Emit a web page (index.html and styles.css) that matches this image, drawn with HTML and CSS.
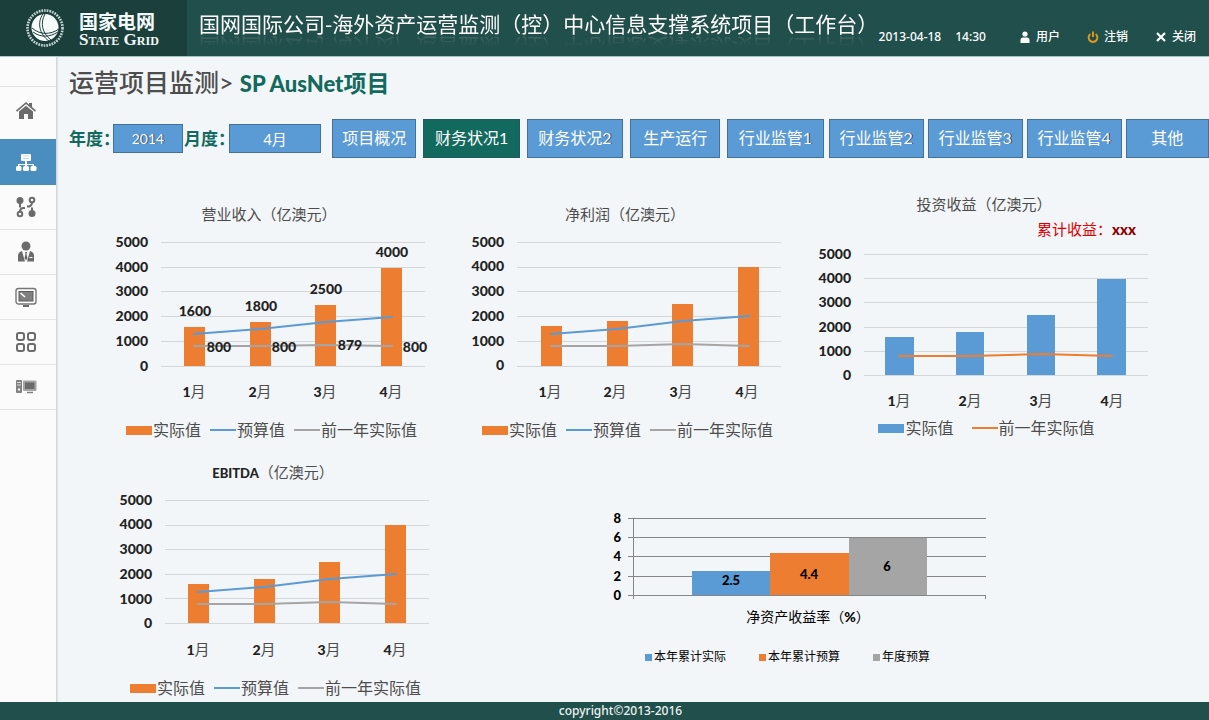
FILE: index.html
```html
<!DOCTYPE html>
<html lang="zh-CN">
<head>
<meta charset="utf-8">
<meta name="viewport" content="width=device-width, initial-scale=1">
<title>海外资产运营监测（控）中心</title>
<link rel="stylesheet" href="styles.css">
</head>
<body>
<header class="topbar">
  <a class="brand" href="#">
    <svg class="brand-mark" viewBox="0 0 40 40" aria-hidden="true">
      <circle cx="20" cy="20" r="17.500" fill="none" stroke="#c5d6d4" stroke-width="2.600" stroke-dasharray="1.700 1"/>
      <circle cx="20" cy="19.500" r="13.500" fill="#f6faf9"/>
      <g fill="none" stroke="#1c413d" stroke-width="1">
        <path d="M18 6c-6 8-4 20 6 27"/>
        <path d="M20 6c-5 9-3 19 6 26"/>
        <path d="M7 20c8 7 18 7 27 1"/>
        <path d="M8 24c8 6 17 5 25 0"/>
      </g>
    </svg>
    <span class="brand-text">
      <span class="brand-cn">国家电网</span>
      <span class="brand-en">State Grid</span>
    </span>
  </a>
  <h1 class="system-name">国网国际公司-海外资产运营监测（控）中心信息支撑系统项目（工作台）</h1>
  <div class="session">
    <time class="clock" datetime="2013-04-18T14:30"><span>2013-04-18</span><span>14:30</span></time>
    <button class="session-btn" type="button">
      <svg viewBox="0 0 12 12" class="session-icon" aria-hidden="true"><circle cx="6" cy="3" r="2.600" fill="#fff"/><path d="M1.500 12V9q0-2.600 2.600-2.600h3.800q2.600 0 2.600 2.600v3z" fill="#fff"/></svg>
      用户
    </button>
    <button class="session-btn" type="button">
      <svg viewBox="0 0 12 12" class="session-icon" aria-hidden="true"><path d="M3.400 3a4.400 4.400 0 1 0 5.200 0M6 .5v5.500" fill="none" stroke="#e39a1c" stroke-width="1.900"/></svg>
      注销
    </button>
    <button class="session-btn" type="button">
      <svg viewBox="0 0 12 12" class="session-icon" aria-hidden="true"><path d="M2 2l8 8M10 2l-8 8" stroke="#fff" stroke-width="2.200"/></svg>
      关闭
    </button>
  </div>
</header>

<div class="body">
  <nav class="sidebar" aria-label="主导航">
    <span class="side-top"></span>
    <a class="side-item side-home" href="#" aria-label="首页">
      <svg class="side-icon" viewBox="0 0 22 22"><path d="M1 11.500L11 3l3 2.500V4h3v4l4 3.500-1 1.200L11 5 2 12.700z" fill="#6b6b6b"/><path d="M4 12.500L11 6.800l7 5.700V20h-5v-5H9v5H4z" fill="#6b6b6b"/></svg>
    </a>
    <a class="side-item active" href="#" aria-label="组织" aria-current="page">
      <svg class="side-icon" viewBox="0 0 22 22" fill="#fff"><rect x="6" y="3" width="10" height="7" rx="1"/><path d="M10 10h2v3h7v2h-1.500v-1H12v2h-2v-2H4.500v1H3v-2h7z"/><rect x="1" y="15" width="5.500" height="5" rx="1.500"/><rect x="8" y="15" width="6" height="5" rx="1.500"/><rect x="15.500" y="15" width="6" height="5" rx="1.500"/><path d="M8 5h6M8 7.500h6" stroke="#bcd7ec" stroke-width="1"/></svg>
    </a>
    <a class="side-item" href="#" aria-label="流程">
      <svg class="side-icon" viewBox="0 0 22 22" fill="none" stroke="#6b6b6b" stroke-width="2"><circle cx="5" cy="4.500" r="2.500" fill="#6b6b6b"/><path d="M5 7v4.500"/><circle cx="17" cy="4" r="2.300"/><path d="M17 6.500q0 3-3 4h-2M10 12H8q-3 .5-3 3.500"/><circle cx="5" cy="18" r="2.300"/><circle cx="17" cy="17.500" r="2.500" fill="#6b6b6b"/><path d="M17 15v-3.500"/></svg>
    </a>
    <a class="side-item" href="#" aria-label="人员">
      <svg class="side-icon" viewBox="0 0 22 22" fill="#6b6b6b"><circle cx="11" cy="5" r="4.500"/><path d="M3 20.500v-6q0-3.500 4-4.500l3 10.500zM19 20.500v-6q0-3.500-4-4.500l-3 10.500zM10 11h2l-.5 2 1 4-1.500 2.500L9.500 17l1-4z"/><path d="M14.500 16.500h3" stroke="#fff" stroke-width="1"/></svg>
    </a>
    <a class="side-item" href="#" aria-label="监视">
      <svg class="side-icon" viewBox="0 0 22 22"><rect x="1" y="2.500" width="20" height="15.500" rx="2.500" fill="none" stroke="#777" stroke-width="1.400"/><rect x="4" y="5.500" width="14" height="9.500" fill="#808080" stroke="#5c5c5c"/><path d="M5.500 7l4.500 4" stroke="#fff" stroke-width="1.600"/><path d="M8 20h6" stroke="#6b6b6b" stroke-width="2"/></svg>
    </a>
    <a class="side-item" href="#" aria-label="应用">
      <svg class="side-icon" viewBox="0 0 22 22" fill="none" stroke="#6b6b6b" stroke-width="2"><rect x="2" y="2" width="7" height="7" rx="2"/><rect x="13" y="2" width="7" height="7" rx="2"/><rect x="2" y="13" width="7" height="7" rx="2"/><rect x="13" y="13" width="7" height="7" rx="2"/></svg>
    </a>
    <a class="side-item" href="#" aria-label="设备">
      <svg class="side-icon" viewBox="0 0 22 22"><rect x="1" y="4" width="6" height="13" rx="1" fill="#808080"/><path d="M2 6.500h4M2 9h4" stroke="#ddd"/><circle cx="4" cy="13.500" r="1.200" fill="#eee"/><rect x="8" y="4.500" width="13.500" height="10.500" rx="1" fill="#a5a5a5"/><rect x="10" y="6.500" width="9.500" height="6.500" fill="#6b6b6b"/><path d="M12 16.500h6" stroke="#808080" stroke-width="1.500"/></svg>
    </a>
  </nav>

  <main class="main">
    <h2 class="crumb"><span>运营项目监测&gt;</span> <strong>SP AusNet<span class="crumb-cn">项目</span></strong></h2>

    <div class="toolbar">
      <div class="filters">
        <label class="filter-label" for="year">年度：</label>
        <select class="filter year" id="year"><option>2014</option></select>
        <label class="filter-label" for="month">月度：</label>
        <select class="filter month" id="month"><option>4月</option></select>
      </div>
      <div class="tabs tabs-status">
        <button class="tab tab-short" type="button">项目概况</button>
        <button class="tab current" type="button">财务状况1</button>
        <button class="tab" type="button">财务状况<span class="num">2</span></button>
        <button class="tab tab-mid" type="button">生产运行</button>
        <button class="tab" type="button">行业监管<span class="num">1</span></button>
      </div>
      <div class="tabs tabs-rules">
        <button class="tab" type="button">行业监管<span class="num">2</span></button>
        <button class="tab" type="button">行业监管<span class="num">3</span></button>
        <button class="tab" type="button">行业监管<span class="num">4</span></button>
        <button class="tab tab-short" type="button">其他</button>
      </div>
    </div>

    <div class="row row-first">
      <figure class="chart lowered">
        <figcaption class="chart-title">营业收入（亿澳元）</figcaption>
        <svg class="plot" viewBox="0 0 356 196" role="img" aria-label="营业收入">
          <path class="grid" d="M70 18.500h264M70 43.500h264M70 67.500h264M70 92.500h264M70 117.500h264M70 142.500h264"/>
          <g class="axis end"><text x="57" y="23">5000</text><text x="57" y="48">4000</text><text x="57" y="72">3000</text><text x="57" y="97">2000</text><text x="57" y="122">1000</text><text x="57" y="147">0</text></g>
          <path class="fill-orange" d="M93 103h21v39h-21zM159 98h21v44h-21zM224 81h21v61h-21zM290 44h21v98h-21z"/>
          <polyline class="line blue" points="103,110 169,105 235,98 301,93"/>
          <polyline class="line gray" points="103,122 169,122 235,121 301,122"/>
          <g class="axis mid"><text x="104" y="92">1600</text><text x="170" y="87">1800</text><text x="235" y="70">2500</text><text x="301" y="33">4000</text><text x="128" y="128">800</text><text x="193" y="128">800</text><text x="259" y="126">879</text><text x="324" y="128">800</text></g>
          <g class="axis mid"><text x="103" y="173">1<tspan class="cn">月</tspan></text><text x="169" y="173">2<tspan class="cn">月</tspan></text><text x="234" y="173">3<tspan class="cn">月</tspan></text><text x="300" y="173">4<tspan class="cn">月</tspan></text></g>
        </svg>
        <ul class="legend">
          <li><i class="key-bar bg-orange"></i>实际值</li>
          <li><i class="key-line bg-blue"></i>预算值</li>
          <li><i class="key-line bg-gray"></i>前一年实际值</li>
        </ul>
      </figure>

      <figure class="chart lowered">
        <figcaption class="chart-title">净利润（亿澳元）</figcaption>
        <svg class="plot" viewBox="0 0 356 196" role="img" aria-label="净利润">
          <path class="grid" d="M70 18.500h264M70 43.500h264M70 67.500h264M70 92.500h264M70 117.500h264M70 142.500h264"/>
          <g class="axis end"><text x="57" y="23">5000</text><text x="57" y="47">4000</text><text x="57" y="72">3000</text><text x="57" y="97">2000</text><text x="57" y="122">1000</text><text x="57" y="146">0</text></g>
          <path class="fill-orange" d="M94 102h21v40h-21zM160 97h21v45h-21zM225 80h21v62h-21zM291 43h21v99h-21z"/>
          <polyline class="line blue" points="104,110 170,105 236,97 302,92"/>
          <polyline class="line gray" points="104,122 170,122 236,120 302,122"/>
          <g class="axis mid"><text x="103" y="173">1<tspan class="cn">月</tspan></text><text x="168" y="173">2<tspan class="cn">月</tspan></text><text x="234" y="173">3<tspan class="cn">月</tspan></text><text x="300" y="173">4<tspan class="cn">月</tspan></text></g>
        </svg>
        <ul class="legend">
          <li><i class="key-bar bg-orange"></i>实际值</li>
          <li><i class="key-line bg-blue"></i>预算值</li>
          <li><i class="key-line bg-gray"></i>前一年实际值</li>
        </ul>
      </figure>

      <figure class="chart">
        <figcaption class="chart-title">投资收益（亿澳元）</figcaption>
        <p class="total">累计收益：<b>xxx</b></p>
        <svg class="plot" viewBox="0 0 362 179" role="img" aria-label="投资收益">
          <path class="grid" d="M61 15.500h284M61 39.500h284M61 63.500h284M61 88.500h284M61 112.500h284M61 136.500h284"/>
          <g class="axis end"><text x="48" y="20">5000</text><text x="48" y="44">4000</text><text x="48" y="68">3000</text><text x="48" y="93">2000</text><text x="48" y="117">1000</text><text x="48" y="141">0</text></g>
          <path class="fill-blue" d="M82 98h29v38h-29zM153 93h28v43h-28zM224 76h28v60h-28zM294 40h29v96h-29z"/>
          <polyline class="line orange" points="96,117 167,117 238,115 309,117"/>
          <g class="axis mid"><text x="96" y="167">1<tspan class="cn">月</tspan></text><text x="167" y="167">2<tspan class="cn">月</tspan></text><text x="238" y="167">3<tspan class="cn">月</tspan></text><text x="309" y="167">4<tspan class="cn">月</tspan></text></g>
        </svg>
        <ul class="legend legend-wide">
          <li><i class="key-bar bg-blue"></i>实际值</li>
          <li><i class="key-line bg-orange"></i>前一年实际值</li>
        </ul>
      </figure>
    </div>

    <div class="row row-second">
      <figure class="chart">
        <figcaption class="chart-title"><b>EBITDA</b>（亿澳元）</figcaption>
        <svg class="plot" viewBox="0 0 356 195" role="img" aria-label="EBITDA">
          <path class="grid" d="M70 17.500h264M70 42.500h264M70 66.500h264M70 91.500h264M70 115.500h264M70 140.500h264"/>
          <g class="axis end"><text x="57" y="22">5000</text><text x="57" y="46">4000</text><text x="57" y="71">3000</text><text x="57" y="96">2000</text><text x="57" y="121">1000</text><text x="57" y="145">0</text></g>
          <path class="fill-orange" d="M93 101h21v39h-21zM159 96h21v44h-21zM224 79h21v61h-21zM290 42h21v98h-21z"/>
          <polyline class="line blue" points="103,109 169,104 235,96 301,91"/>
          <polyline class="line gray" points="103,121 169,121 235,119 301,121"/>
          <g class="axis mid"><text x="103" y="172">1<tspan class="cn">月</tspan></text><text x="169" y="172">2<tspan class="cn">月</tspan></text><text x="234" y="172">3<tspan class="cn">月</tspan></text><text x="300" y="172">4<tspan class="cn">月</tspan></text></g>
        </svg>
        <ul class="legend">
          <li><i class="key-bar bg-orange"></i>实际值</li>
          <li><i class="key-line bg-blue"></i>预算值</li>
          <li><i class="key-line bg-gray"></i>前一年实际值</li>
        </ul>
      </figure>

      <figure class="chart">
        <svg class="plot" viewBox="0 0 714 143" role="img" aria-label="净资产收益率">
          <path class="grid dark" d="M177 56.500h358M177 75.500h358M177 94.500h358M177 114.500h358"/>
          <path class="fill-blue" d="M241 109h78v24h-78z"/>
          <path class="fill-orange" d="M319 91h79v42h-79z"/>
          <path class="fill-gray" d="M398 76h78v57h-78z"/>
          <path class="grid dark" d="M177 133.500h358M182.500 56v81M534.500 133v4"/>
          <g class="axis small end"><text x="170" y="61">8</text><text x="170" y="80">6</text><text x="170" y="99">4</text><text x="170" y="119">2</text><text x="170" y="138">0</text></g>
          <g class="axis small mid"><text x="280" y="123">2.5</text><text x="358" y="117">4.4</text><text x="436" y="109">6</text></g>
        </svg>
        <figcaption class="rate-title">净资产收益率（<b>%</b>）</figcaption>
        <ul class="rate-legend">
          <li><i class="key-dot bg-blue"></i>本年累计实际</li>
          <li><i class="key-dot bg-orange"></i>本年累计预算</li>
          <li><i class="key-dot bg-gray"></i>年度预算</li>
        </ul>
      </figure>
    </div>
  </main>
</div>

<footer class="footer">copyright©2013-2016</footer>
</body>
</html>
```
FILE: styles.css
```css
:root {
  --teal: #214f4b;
  --teal-dark: #1b403c;
  --green: #12695d;
  --blue: #5b9bd5;
  --orange: #ed7d31;
  --gray: #a5a5a5;
  --border: #41719c;
}

* { box-sizing: border-box; }

body {
  margin: 0;
  min-height: 100vh;
  display: flex;
  flex-direction: column;
  background: #f3f6f8;
  color: #4d4d4d;
  font-family: "Lato", "Noto Sans CJK SC", sans-serif;
}

button, select { font: inherit; color: inherit; }

/* Header */
.topbar {
  display: flex;
  height: 56px;
  background: var(--teal);
  color: #fff;
  font-family: "Noto Sans", "Noto Sans CJK SC", sans-serif;
}

.brand {
  flex: none;
  display: flex;
  gap: 14px;
  width: 187px;
  padding: 8px 0 0 25px;
  background: var(--teal-dark);
  color: #f4faf9;
  text-decoration: none;
}

.brand-mark { width: 40px; height: 40px; }
.brand-text { display: flex; flex-direction: column; padding-top: 2px; }
.brand-cn { font: 700 19px/22px "Noto Sans CJK SC", sans-serif; }
.brand-en { font: 700 17px/15px "Liberation Serif", serif; font-variant: small-caps; white-space: nowrap; }

.system-name {
  flex: 1;
  align-self: flex-start;
  margin: 0;
  padding: 8px 0 0 12px;
  font: 400 21px/30px "Noto Sans CJK SC", sans-serif;
  white-space: nowrap;
  -webkit-box-reflect: below -5px linear-gradient(transparent 65%, rgba(255, 255, 255, 0.18));
}

.session {
  flex: none;
  display: flex;
  align-items: center;
  gap: 27px;
  padding: 17px 13px 0 0;
  font-size: 12px;
  line-height: 16px;
}

.clock { display: flex; gap: 14px; margin-right: 6px; font-weight: 500; }

.session-btn {
  display: flex;
  align-items: center;
  gap: 5px;
  padding: 0;
  border: 0;
  background: none;
  font-weight: 500;
}

.session-icon { width: 12px; height: 12px; }

/* Sidebar */
.body { flex: 1; display: flex; border-top: 1px solid #a5c2c2; }

.sidebar {
  flex: none;
  width: 57px;
  display: flex;
  flex-direction: column;
  border-right: 1px solid #d4d8da;
  background: #fbfbfb;
  box-shadow: 1px 0 1px #e0e4e6;
}

.side-top { height: 30px; border-bottom: 1px solid #e4e4e4; }

.side-item {
  display: flex;
  align-items: center;
  justify-content: center;
  height: 45px;
  padding-right: 4px;
  border-bottom: 1px solid #e4e4e4;
}

.side-home { height: 52px; padding-bottom: 6px; border-bottom: 0; }
.side-item.active { height: 46px; background: #4a8dbf; border-bottom: 0; }
.side-icon { width: 22px; height: 22px; }

/* Content */
.main { flex: 1; min-width: 0; padding: 11px 0 0; }

.crumb {
  margin: 0;
  padding-left: 12px;
  font-weight: 500;
  font-size: 25px;
  line-height: 28px;
}

.crumb strong { font-size: 22px; font-weight: 900; color: var(--green); }
.crumb-cn { font-size: 23px; font-weight: 700; }

.toolbar {
  display: flex;
  align-items: center;
  margin-top: 21px;
  padding-left: 12px;
}

.filters { flex: none; display: flex; align-items: center; margin-right: 11px; }
.filter-label {
  width: 44px;
  color: var(--green);
  font-weight: 700;
  font-size: 17px;
  line-height: 28px;
  font-feature-settings: "halt";
  white-space: nowrap;
}
.filter + .filter-label { width: 45px; padding-left: 1px; }

.filter {
  appearance: none;
  height: 29px;
  padding: 0;
  border: 1px solid var(--border);
  border-radius: 0;
  background: var(--blue);
  color: #fff;
  font-size: 15px;
  text-align: center;
  text-align-last: center;
}

.year { width: 70px; font-size: 14px; text-shadow: 1px 0 0 #39434d; }
.month { width: 92px; margin-left: 1px; }

.tabs { display: flex; }
.tabs-status { flex: 491; gap: 7px; margin-right: 5px; }
.tabs-rules { flex: 380; gap: 4px; }

.tab {
  flex: 96 1 0;
  height: 39px;
  padding: 0 0 4px;
  border: 1px solid var(--border);
  background: var(--blue);
  color: #fff;
  font-size: 16px;
  font-weight: 400;
  white-space: nowrap;
}

.tab-short { flex-grow: 84; }
.tab-mid { flex-grow: 90; }
.tab.current { background: var(--green); border-color: #1d5b5c; }
.num { text-shadow: 1px 0 0 #26323d; }

.row { display: grid; }
.row-first { grid-template-columns: 356fr 356fr 362fr; margin-top: 36px; padding: 0 44px 0 34px; }
.row-second { grid-template-columns: 356fr 714fr; margin-top: 22px; padding: 0 44px 0 38px; }

.chart { margin: 0; min-width: 0; }
.lowered { padding-top: 10px; }
.chart-title { font-size: 15px; line-height: 20px; text-align: center; }
.chart-title b { color: #222; font-size: 13px; font-weight: 900; }
.plot { display: block; width: 100%; height: auto; }

.total { margin: 5px 0 0; padding-right: 29px; color: #e00000; font-size: 15px; line-height: 20px; text-align: right; }
.total b { color: #900000; font-weight: 900; }

.legend, .rate-legend { display: flex; justify-content: center; margin: 0; list-style: none; white-space: nowrap; }
.legend { gap: 9px; padding: 0 0 0 5px; font-size: 16px; line-height: 20px; }
.legend-wide { gap: 18px; }
.legend li { display: flex; align-items: center; gap: 1px; }

.key-bar { width: 26px; height: 9px; }
.key-line { width: 26px; height: 2px; }
.key-dot { width: 7px; height: 7px; }
.bg-orange { background: var(--orange); }
.bg-blue { background: var(--blue); }
.bg-gray { background: var(--gray); }

.rate-title { color: #000; font-size: 14px; line-height: 24px; text-align: center; }
.rate-title b { font-weight: 900; }
.rate-legend { gap: 33px; padding: 18px 41px 0 0; color: #000; font-size: 12px; line-height: 20px; }
.rate-legend li { display: flex; align-items: center; gap: 2px; }

/* Plot parts */
.grid { fill: none; stroke: #d4d7d9; stroke-width: 1; }
.grid.dark { stroke: #868686; }
.axis { fill: #222; font-size: 14px; font-weight: 900; }
.axis.small { fill: #000; font-size: 13px; }
.end { text-anchor: end; }
.mid { text-anchor: middle; }
.cn { fill: #4d4d4d; font-size: 15px; font-weight: 400; }
.fill-orange { fill: var(--orange); }
.fill-blue { fill: var(--blue); }
.fill-gray { fill: var(--gray); }
.line { fill: none; stroke-width: 2; stroke-linecap: round; }
.line.blue { stroke: var(--blue); }
.line.gray { stroke: var(--gray); }
.line.orange { stroke: var(--orange); }

.footer {
  height: 18px;
  padding-left: 32px;
  background: var(--teal);
  color: #eef4f3;
  font: 500 12px/17px "Noto Sans", sans-serif;
  text-align: center;
}
```
